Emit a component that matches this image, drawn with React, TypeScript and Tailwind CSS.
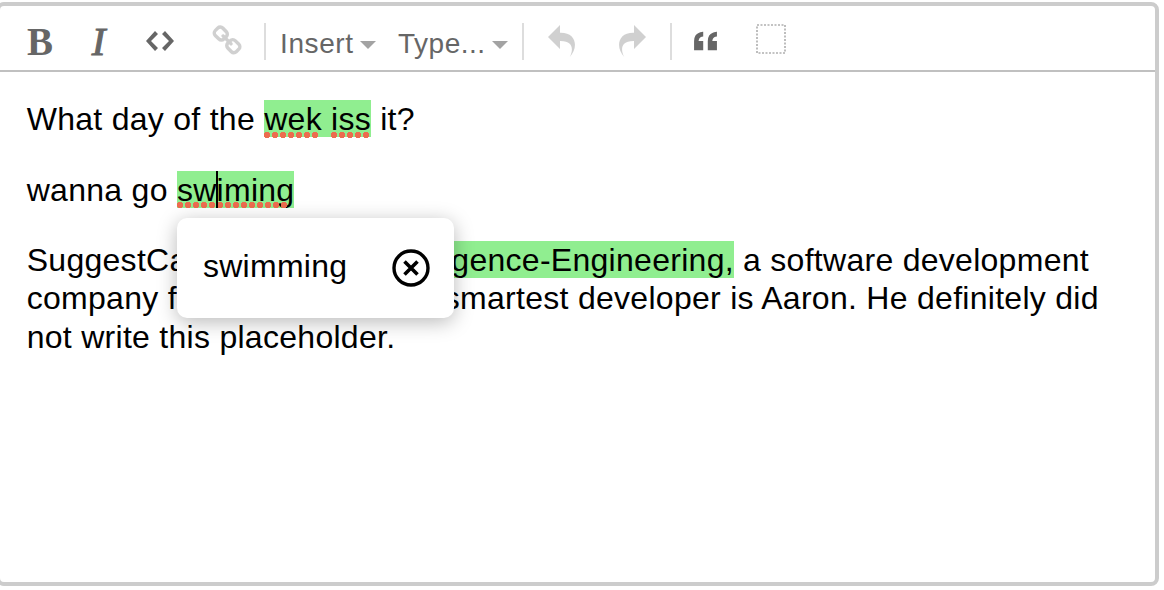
import type { ReactNode } from "react";

interface IconProps {
    viewBox: string;
    path: string;
    className: string;
}

const icons = {
    code: {
        viewBox: "0 0 896 1024",
        path: "M608 192l-96 96 224 224-224 224 96 96 288-320-288-320zM288 192l-288 320 288 320 96-96-224-224 224-224-96-96z",
    },
    link: {
        viewBox: "0 0 951 1024",
        path: "M832 694q0-22-16-38l-118-118q-16-16-38-16-24 0-41 18 1 1 10 10t12 12 8 10 7 14 2 15q0 22-16 38t-38 16q-8 0-15-2t-14-7-10-8-12-12-10-10q-18 17-18 41 0 22 16 38l117 118q15 15 38 15 22 0 38-14l84-83q16-16 16-38zM430 292q0-22-16-38l-117-118q-16-16-38-16-22 0-38 15l-84 83q-16 16-16 37 0 22 16 38l118 118q15 15 38 15 24 0 41-17-1-1-10-10t-12-12-8-10-7-14-2-15q0-22 16-38t38-16q8 0 15 2t14 7 10 8 12 12 10 10q18-17 18-41zM941 694q0 68-48 116l-84 83q-47 47-116 47-69 0-116-48l-117-118q-47-47-47-116 0-70 50-119l-50-50q-49 50-118 50-68 0-116-48l-118-118q-48-48-48-116t48-116l84-83q47-47 116-47 69 0 116 48l117 118q47 47 47 116 0 70-50 119l50 50q49-50 118-50 68 0 116 48l118 118q48 48 48 116z",
    },
    undo: {
        viewBox: "0 0 1024 1024",
        path: "M761 1024c113-206 132-520-313-509v253l-384-384 384-384v248c534-13 594 472 313 775z",
    },
    redo: {
        viewBox: "0 0 1024 1024",
        path: "M576 248v-248l384 384-384 384v-253c-446-10-427 303-313 509-280-303-221-789 313-775z",
    },
    quote: {
        viewBox: "0 0 640 896",
        path: "M0 448v256h256v-256h-128c0 0 0-128 128-128v-128c0 0-256 0-256 256zM640 320v-128c0 0-256 0-256 256v256h256v-256h-128c0 0 0-128 128-128z",
    },
};

function Icon({ viewBox, path, className }: IconProps) {
    return (
        <svg viewBox={viewBox} className={`h-8 shrink-0 fill-current ${className}`}>
            <path d={path} />
        </svg>
    );
}

function Separator({ className }: { className: string }) {
    return <span className={`h-[37px] w-0.5 shrink-0 bg-[#ddd] ${className}`} />;
}

function Dropdown({ label, className }: { label: string; className: string }) {
    return (
        <button className={`flex shrink-0 items-center justify-between text-[28px] leading-8 ${className}`}>
            <span className="mt-[3px]">{label}</span>
            <span className="mt-[4px] border-x-8 border-t-8 border-x-transparent border-t-[#a3a3a3]" />
        </button>
    );
}

// misspelled word with the dotted line under it
function Typo({ children, dots }: { children: ReactNode; dots: string }) {
    return (
        <span className="relative inline-block">
            {children}
            <span
                className={`absolute left-0 bottom-px h-1.5 bg-[radial-gradient(circle,#ec6c4f_2.9px,transparent_3.4px)] bg-[length:8px_6px] -ml-px ${dots}`}
            />
        </span>
    );
}

function Toolbar() {
    return (
        <div className="flex h-[66px] items-start border-b-2 border-[#c0c0c0] pt-[19px] pl-[27px] text-[#666]">
            <button className="h-8 w-[25px] shrink-0 origin-left scale-x-95 font-['Liberation_Serif',serif] text-[41px] leading-8 font-bold">
                B
            </button>
            <button className="ml-[39px] h-8 w-[15px] shrink-0 font-['Liberation_Serif',serif] text-[41px] leading-8 italic [-webkit-text-stroke:1px_#666]">
                I
            </button>
            <Icon {...icons.code} className="ml-[40px] w-7" />
            <Icon {...icons.link} className="ml-[38px] w-[30px] opacity-30" />
            <Separator className="ml-[22px] -mt-0.5" />
            <Dropdown label="Insert" className="ml-[14px] w-[96px] tracking-[0.6px]" />
            <Dropdown label="Type..." className="ml-[22px] w-[110px] tracking-[0.5px]" />
            <Separator className="ml-[14px] -mt-0.5" />
            <Icon {...icons.undo} className="ml-[22px] w-8 opacity-30" />
            <Icon {...icons.redo} className="ml-[38px] w-8 opacity-30" />
            <Separator className="ml-[22px] -mt-0.5" />
            <Icon {...icons.quote} className="ml-[22px] w-[23px]" />
            <svg viewBox="0 0 30 30" className="ml-[39px] -mt-px h-[30px] w-[30px] shrink-0">
                <rect x="1" y="1" width="28" height="28" fill="none" stroke="#888" strokeWidth="1.1" strokeDasharray="2 1.5" />
            </svg>
        </div>
    );
}

function SuggestionPopup() {
    return (
        <div className="absolute top-[47px] left-0 flex h-[100px] w-[277px] items-center justify-between rounded-[10px] bg-white pr-6 pl-[26px] shadow-[0_4px_20px_rgba(0,0,0,0.28)]">
            <span className="mb-0.5">swimming</span>
            <svg viewBox="0 0 38 38" className="h-[38px] w-[38px]" fill="none" stroke="#000">
                <circle cx="19" cy="19" r="17" strokeWidth="3.4" />
                <path d="M12.5 12.5l13 13M25.5 12.5l-13 13" strokeWidth="3.6" />
            </svg>
        </div>
    );
}

export default function App() {
    return (
        <div className="h-[590px] w-[1164px] overflow-hidden bg-white pt-0.5 font-['Liberation_Sans',Arial,sans-serif]">
            <div className="-ml-1 h-[584px] w-[1163px] rounded-lg border-4 border-[#ccc]">
                <Toolbar />
                <div className="space-y-8 pt-[28.1px] pl-[26.7px] text-[32px] leading-[38.4px] tracking-[0.28px] whitespace-nowrap text-black">
                    <p>
                        What day of the{" "}
                        <span className="bg-[#90ee90] pt-px">
                            <Typo dots="w-14">wek</Typo> <Typo dots="w-10">iss</Typo>
                        </span>{" "}
                        it?
                    </p>
                    <p>
                        wanna go{" "}
                        <span className="relative z-10 inline-block">
                            <span className="bg-[#90ee90] pt-px">
                                <Typo dots="w-28">swiming</Typo>
                            </span>
                            <span className="absolute top-0 left-[39px] h-[37px] w-0.5 bg-black" />
                            <SuggestionPopup />
                        </span>
                    </p>
                    <p>
                        SuggestCat<span className="tracking-[0.45px]"> is made by </span>
                        <span className="bg-[#90ee90] pt-px">Intelligence-Engineering,</span> a software development
                        <br />
                        company from<span className="tracking-[0.25px]"> Chicago. The </span>smartest developer is Aaron. He definitely did
                        <br />
                        not write this placeholder.
                    </p>
                </div>
            </div>
        </div>
    );
}
